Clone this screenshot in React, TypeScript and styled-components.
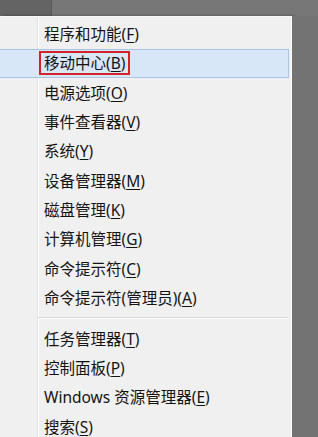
import React from 'react';
import styled, { createGlobalStyle } from 'styled-components';

const GlobalStyle = createGlobalStyle`
  html, body {
    margin: 0;
    padding: 0;
    background: #7a7a7a;
  }
`;

const Page = styled.div`
  width: 318px;
  height: 437px;
  overflow: hidden;
  display: flex;
  flex-direction: column;
  background: #777777;
`;

const TopStrip = styled.div`
  height: 16px;
  flex: none;
  display: flex;
`;

const DarkTab = styled.div`
  width: 51px;
  background: #646464;
  border-right: 1px solid #5a5a5a;
`;

const Body = styled.div`
  flex: 1;
  display: flex;
  min-height: 0;
`;

const Menu = styled.div`
  width: 292px;
  flex: none;
  padding-top: 2.5px;
  box-sizing: border-box;
  background-color: #f0f0f0;
  background-image: linear-gradient(
    to right,
    transparent 37px,
    #e3e3e3 37px,
    #e3e3e3 38px,
    #ffffff 38px,
    #ffffff 39px,
    transparent 39px
  );
  border-top: 1px solid #fafafa;
  border-right: 1px solid #ffffff;
  box-shadow: 2px 0 0 #4e4e4e, 3px 0 3px rgba(0, 0, 0, 0.35);
  font-family: "Noto Sans", "Noto Sans CJK SC", sans-serif;
  font-size: 15.5px;
  color: #141414;
`;

const Item = styled.div<{ $active?: boolean }>`
  height: 29.3px;
  box-sizing: border-box;
  margin-right: 2px;
  padding-left: 44px;
  display: flex;
  align-items: center;
  white-space: nowrap;
  background: ${(p) => (p.$active ? '#d8e7f8' : 'transparent')};
  border: 1px solid ${(p) => (p.$active ? '#a9c4e2' : 'transparent')};
  border-left: none;
`;

const Label = styled.span<{ $marked?: boolean }>`
  line-height: 18px;
  ${(p) =>
    p.$marked &&
    `
    border: 2px solid #d3222a;
    padding: 1px 3px;
    margin-left: -5px;
  `}

  u {
    text-underline-offset: 2px;
  }
`;

const Separator = styled.div`
  height: 11.5px;
  margin-left: 38px;
  margin-right: 3px;
  display: flex;
  flex-direction: column;
  justify-content: center;

  &::before {
    content: "";
    height: 1px;
    background: #d7d7d7;
    border-bottom: 1px solid #ffffff;
  }
`;

const Backdrop = styled.div`
  flex: 1;
  background: #737373;
`;

type Entry = { text: string; key: string; active?: boolean } | 'sep';

const entries: Entry[] = [
  { text: '程序和功能', key: 'F' },
  { text: '移动中心', key: 'B', active: true },
  { text: '电源选项', key: 'O' },
  { text: '事件查看器', key: 'V' },
  { text: '系统', key: 'Y' },
  { text: '设备管理器', key: 'M' },
  { text: '磁盘管理', key: 'K' },
  { text: '计算机管理', key: 'G' },
  { text: '命令提示符', key: 'C' },
  { text: '命令提示符(管理员)', key: 'A' },
  'sep',
  { text: '任务管理器', key: 'T' },
  { text: '控制面板', key: 'P' },
  { text: 'Windows 资源管理器', key: 'E' },
  { text: '搜索', key: 'S' },
];

export default function App() {
  return (
    <>
      <GlobalStyle />
      <Page>
        <TopStrip>
          <DarkTab />
        </TopStrip>
        <Body>
          <Menu>
            {entries.map((e, i) =>
              e === 'sep' ? (
                <Separator key={i} />
              ) : (
                <Item key={i} $active={e.active}>
                  <Label $marked={e.active}>
                    {e.text}(<u>{e.key}</u>)
                  </Label>
                </Item>
              )
            )}
          </Menu>
          <Backdrop />
        </Body>
      </Page>
    </>
  );
}
